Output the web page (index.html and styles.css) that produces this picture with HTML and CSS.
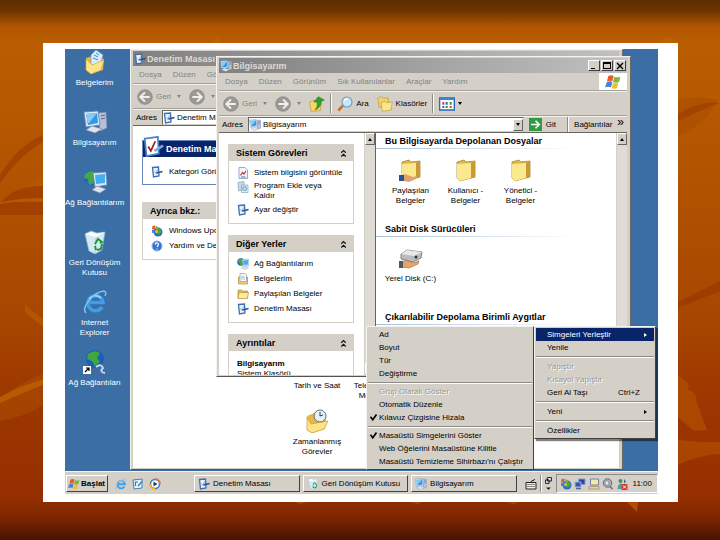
FILE: index.html
```html
<!DOCTYPE html>
<html lang="tr">
<head>
    <meta charset="UTF-8">
    <meta name="viewport" content="width=device-width, initial-scale=1.0">
    <title>Bilgisayarım</title>
    <link rel="stylesheet" href="styles.css">
</head>
<body>
    <!-- leaf background -->
    <svg class="leaves" viewBox="0 0 720 540" preserveAspectRatio="none" aria-hidden="true">
        <g fill="#8f2f00" opacity="0.45">
            <path d="M0 175 Q18 145 45 134 L45 140 Q20 155 0 183Z"/>
            <path d="M0 205 Q10 186 45 186 V215 H0Z"/>
            <path d="M678 302 L720 281 V291 L678 308Z"/>
            <path d="M678 114 Q700 100 720 103 Q700 110 678 121Z"/>
        </g>
        <path d="M678 99 Q700 95 718 100 Q705 125 678 136Z" fill="#9a4300" opacity="0.3"/>
        <path d="M0 203 Q14 198 45 198 V202 Q16 201 0 204Z" fill="#bd5d00" opacity="0.8"/>
        <path d="M27 186 Q35 178 45 175 V186Z" fill="#b85a00" opacity="0.6"/>
        <path d="M25 304 Q32 312 45 320 V328 Q30 317 25 312Z" fill="#b85800" opacity="0.8"/>
        <path d="M0 398 Q20 382 45 373 V404 Q22 418 0 421Z" fill="#ad5000" opacity="0.5"/>
        <path d="M0 397 Q22 385 45 379 V384 Q22 393 0 403Z" fill="#bd6200" opacity="0.8"/>
        <path d="M678 375 L689 384 L688 390 Q697 392 696 400 L699 408 L707 430 L694 431 L678 417Z" fill="#b05000" opacity="0.7"/>
        <path d="M678 440 L700 442 H720 V454 Q698 455 678 465Z" fill="#b05000" opacity="0.65"/>
        <path d="M627 502 H638 L637 512Z" fill="#b85800" opacity="0.8"/>
        <path d="M212 43 L217 35 L222 43Z M655 43 Q665 35 674 38 L672 43Z" fill="#c06600" opacity="0.5"/>
        <path d="M295 502 H308 L300 504Z M410 502 h12 l-4 2Z M505 502 h14 l-5 2Z" fill="#b85800" opacity="0.6"/>
    </svg>

    <!-- icon set -->
    <svg class="icon-set" aria-hidden="true">
        <symbol id="folder" viewBox="0 0 24 24">
            <path d="M3 4 L10 2 L12 4 L21 3 V19 L6 23 L3 20Z" fill="#e0b64a" stroke="#a8862c" stroke-width="0.8"/>
            <path d="M3 6 L17 5 L17 20 L6 23 L3 20Z" fill="#fbe98f"/>
            <path d="M17 5 L21 3 V19 L17 20Z" fill="#c99a33"/>
        </symbol>
        <symbol id="shared" viewBox="0 0 24 24">
            <use href="#folder"/>
            <path d="M1 18 L6 16 L14 19 L18 18 L17 21 L10 24 L1 22Z" fill="#e0a070"/>
            <path d="M0 17 H5 V23 H0Z" fill="#2d4f96"/>
        </symbol>
        <symbol id="documents" viewBox="0 0 24 24">
            <path d="M3 8 L10 6 L21 9 L20 20 L8 24 L3 20Z" fill="#e6b93f"/>
            <path d="M8 5 L13 0 L20 5 L17 15 L8 15Z" fill="#d7ecfa" stroke="#7fa6cc" stroke-width="0.7"/>
            <path d="M11 5 l4 2 M10 8 l5 2 M13 3 l3 2" stroke="#4f8fc8"/>
            <path d="M3 9 L9 15 L21 10 L18 20 L8 24 L3 20Z" fill="#fde48a" stroke="#d1a13a" stroke-width="0.6"/>
        </symbol>
        <symbol id="scheduled" viewBox="0 0 24 24">
            <path d="M2 7 L9 4 L21 9 L20 20 L7 24 L2 21Z" fill="#e6b93f"/>
            <circle cx="15" cy="7" r="6" fill="#e4f1f5" stroke="#668"/>
            <path d="M15 3 V7 L18 6" fill="none" stroke="#246"/>
            <path d="M2 8 L6 15 L23 12 L19 20 L7 24 L2 21Z" fill="#fde48a" stroke="#c99a33" stroke-width="0.7"/>
        </symbol>
        <symbol id="computer" viewBox="0 0 24 24">
            <path d="M15 3 L23 2 L24 18 L17 21Z" fill="#b5bfd8" stroke="#7783a5" stroke-width="0.7"/>
            <path d="M18 6 l4 -1 M18 9 l4 -1" stroke="#59668c"/>
            <path d="M1 2 L15 1 L17 15 L3 17Z" fill="#dce8f5" stroke="#6c86af" stroke-width="0.8"/>
            <path d="M3 4 L14 3 L15 13 L5 15Z" fill="#2d9ae8"/>
            <path d="M3 4 L14 3 L6 13 L5 13Z" fill="#86cbf5"/>
            <path d="M3 20 L9 16 L19 19 L12 23Z" fill="#dfe3ec" stroke="#7c88a6" stroke-width="0.6"/>
        </symbol>
        <symbol id="network" viewBox="0 0 24 24">
            <circle cx="8" cy="8" r="7.5" fill="#2768b8"/>
            <path d="M2 4 Q8 -1 13 3 L10 8 L11 13 L6 15 L5 9 L1 8Z" fill="#45a844"/>
            <path d="M10 3 L23 2 L24 15 L12 17Z" fill="#dce8f5" stroke="#6c86af" stroke-width="0.8"/>
            <path d="M12 5 L22 4 L22 13 L13 14Z" fill="#43aef0"/>
            <path d="M9 20 L14 16 L23 19 L17 23Z" fill="#dfe3ec" stroke="#7c88a6" stroke-width="0.6"/>
        </symbol>
        <symbol id="bin" viewBox="0 0 24 24">
            <path d="M2 4 L8 1 L14 3 L22 2 L19 20 L12 24 L6 21Z" fill="#d5eaf4" stroke="#92b8cf" stroke-width="0.7"/>
            <path d="M2 4 L13 7 L22 2 L14 4 L8 2Z" fill="#fff"/>
            <path d="M13 7 L12 23" stroke="#b0cedd"/>
            <path d="M12 14 L15 9 L19 12 L17 13 M19 14 L18 19 L14 20 M12 16 L13 20" fill="none" stroke="#1f9a3c" stroke-width="2"/>
        </symbol>
        <symbol id="ie" viewBox="0 0 24 24">
            <path d="M19 17 A7.5 7.5 0 1 1 20 12.5 H7" fill="none" stroke="#3f9fe6" stroke-width="3.6"/>
            <path d="M18 8 A8 8 0 0 0 6 9" fill="none" stroke="#a4dcfc" stroke-width="1.5"/>
            <path d="M3 23 C-2 18 10 2 21 1 Q24 2 22 6" fill="none" stroke="#7cc3f2" stroke-width="1.5"/>
        </symbol>
        <symbol id="globe-link" viewBox="0 0 24 24">
            <circle cx="12" cy="9" r="9" fill="#1d5fb5"/>
            <path d="M5 4 Q11 -1 17 3 L14 8 L17 12 L12 16 L9 11 L4 9Z" fill="#3fa73f"/>
            <path d="M13 17 Q18 13 20 18 Q16 22 22 23" fill="none" stroke="#c7d6e8" stroke-width="2"/>
            <path d="M0 16 H8 V24 H0Z" fill="#fff"/>
            <path d="M2 22 L6 18 M3 18 H6 V21" fill="none" stroke="#000" stroke-width="1.2"/>
        </symbol>
        <symbol id="panel" viewBox="0 0 24 24">
            <path d="M3 3 L15 2 L16 20 L5 22Z" fill="#e8f1fb" stroke="#3c70b0" stroke-width="2.6"/>
            <path d="M7 11 L10 15 L13 7" fill="none" stroke="#8aa6c8" stroke-width="2"/>
            <path d="M11 14 L23 11" stroke="#27508c" stroke-width="3.4"/>
        </symbol>
        <symbol id="panel-check" viewBox="0 0 24 24">
            <path d="M2 3 L17 1 L18 20 L4 23Z" fill="#fff" stroke="#4a83c6" stroke-width="2"/>
            <path d="M6 12 L9 17 L14 6" fill="none" stroke="#a31d16" stroke-width="2"/>
            <path d="M13 17 L23 11" stroke="#7eaadf" stroke-width="3"/>
        </symbol>
        <symbol id="flag" viewBox="0 0 24 24">
            <path d="M5 3 Q9 1 13 3 L11 11 Q7 9 3 11Z" fill="#e8582a"/>
            <path d="M14 4 Q18 6 23 4 L21 12 Q16 14 12 12Z" fill="#7db83a"/>
            <path d="M3 12 Q7 10 11 12 L9 20 Q5 18 0 20Z" fill="#3c83dc"/>
            <path d="M12 13 Q16 15 20 13 L18 21 Q14 23 10 21Z" fill="#f6bd27"/>
        </symbol>
        <symbol id="up" viewBox="0 0 24 24">
            <path d="M1 9 L8 6 L10 9 L19 8 L17 22 L3 23Z" fill="#f6d568" stroke="#b08a2b" stroke-width="0.8"/>
            <path d="M9 21 Q14 16 12 9 H7 L14 1 L23 6 L18 8 Q19 17 9 21Z" fill="#2aa02c" stroke="#12701a" stroke-width="0.7"/>
        </symbol>
        <symbol id="search" viewBox="0 0 24 24">
            <path d="M2 22 L9 14" stroke="#c96f31" stroke-width="4"/>
            <circle cx="15" cy="9" r="7.5" fill="#c6e6fa" stroke="#6a98c6" stroke-width="1.6"/>
            <path d="M11 8 Q12 4 16 4" stroke="#fff" stroke-width="2" fill="none"/>
        </symbol>
        <symbol id="folders" viewBox="0 0 24 24">
            <path d="M1 3 L7 1 L9 3 L17 3 V15 L3 17Z" fill="#f3d169" stroke="#b08a2b" stroke-width="0.8"/>
            <path d="M6 10 L12 8 L14 10 L23 9 L21 21 L8 23Z" fill="#fbe58a" stroke="#b08a2b" stroke-width="0.8"/>
        </symbol>
        <symbol id="views" viewBox="0 0 24 20">
            <path d="M1 1 H23 V19 H1Z" fill="#fff" stroke="#2767c0" stroke-width="2"/>
            <path d="M1 1 H23 V4 H1Z" fill="#3c83dc"/>
            <path d="M5 7h3v4h-3z M16 13h3v3h-3z" fill="#c6452b"/>
            <path d="M10 7h3v4h-3z M5 13h3v3h-3z" fill="#2767c0"/>
            <path d="M16 7h3v4h-3z M10 13h3v3h-3z" fill="#36914b"/>
        </symbol>
        <symbol id="go" viewBox="0 0 24 24">
            <path d="M0 0 H24 V24 H0Z" fill="#2f9a40"/>
            <path d="M4 12 H18 M12 5 L19 12 L12 19" fill="none" stroke="#fff" stroke-width="3"/>
        </symbol>
        <symbol id="sysinfo" viewBox="0 0 24 24">
            <path d="M4 1 H16 L21 6 V23 H4Z" fill="#f2f6fc" stroke="#7189b0" stroke-width="1.4"/>
            <path d="M7 17 L11 11 L14 14 L18 8" fill="none" stroke="#c8372d" stroke-width="2.4"/>
            <path d="M8 20 h9" stroke="#4b76bb" stroke-width="2"/>
        </symbol>
        <symbol id="programs" viewBox="0 0 24 24">
            <path d="M2 3 L14 1 V17 L3 20Z" fill="#c4d9ec" stroke="#7895b5" stroke-width="1.2"/>
            <path d="M9 8 H22 V23 H9Z" fill="#e5eff7" stroke="#7895b5" stroke-width="1.2"/>
            <circle cx="15" cy="15" r="4.5" fill="#a8d2e4" stroke="#4b86a8"/>
        </symbol>
        <symbol id="papers" viewBox="0 0 24 24">
            <path d="M3 8 H21 V22 H3Z" fill="#f5d36a" stroke="#a98529" stroke-width="1.2"/>
            <path d="M6 1 H16 L19 4 V17 H6Z" fill="#fff" stroke="#7189b0" stroke-width="1.2"/>
            <path d="M8 6 h7 M8 9 h8 M8 12 h8" stroke="#6b93c6"/>
        </symbol>
        <symbol id="open-folder" viewBox="0 0 24 24">
            <path d="M2 4 H9 L11 6 H21 V20 H2Z" fill="#e9c04f" stroke="#a98529" stroke-width="1.2"/>
            <path d="M2 21 L4 9 H23 L21 21Z" fill="#fdeb9b" stroke="#a98529" stroke-width="1.2"/>
        </symbol>
        <symbol id="disk" viewBox="0 0 24 24">
            <path d="M2 8 L8 4 L23 6 L22 12 L14 16 L2 13Z" fill="#b9bcc1" stroke="#6a6d72" stroke-width="0.8"/>
            <path d="M2 8 L8 4 L23 6 L15 10Z" fill="#e5e7ea"/>
            <circle cx="17" cy="11" r="1.5" fill="#333"/>
            <path d="M1 17 L7 14 L14 17 L20 15 L19 18 L10 22 L1 21Z" fill="#e6a66b" stroke="#a2662f" stroke-width="0.6"/>
            <path d="M0 15 H4 V22 H0Z" fill="#52575e"/>
        </symbol>
        <symbol id="update" viewBox="0 0 24 24">
            <circle cx="14" cy="14" r="9" fill="#2b6cc4"/>
            <path d="M14 6 Q21 8 21 14 L15 20 L12 13Z" fill="#49a646"/>
            <path d="M3 2 L9 1 L8 8 L2 9Z" fill="#e8582a"/>
            <path d="M10 2 L15 4 L14 10 L9 8Z" fill="#7db83a"/>
            <path d="M2 10 L8 9 L7 15 L2 16Z" fill="#3c83dc"/>
            <path d="M9 10 L14 11 L13 17 L8 15Z" fill="#f6bd27"/>
        </symbol>
        <symbol id="help" viewBox="0 0 24 24">
            <circle cx="12" cy="12" r="10" fill="#3573cf" stroke="#8fb3e4" stroke-width="2"/>
            <path d="M8 9 Q9 5 13 6 Q17 8 13 12 L12 14 M12 17 v2" fill="none" stroke="#fff" stroke-width="2.4"/>
        </symbol>
        <symbol id="media" viewBox="0 0 24 24">
            <circle cx="12" cy="12" r="9" fill="#fff" stroke="#3f7ac2" stroke-width="3"/>
            <path d="M12 2 A10 10 0 0 1 22 12" fill="none" stroke="#e8782a" stroke-width="4"/>
            <path d="M2 12 A10 10 0 0 0 12 22" fill="none" stroke="#f0b429" stroke-width="4"/>
            <path d="M9 7 L17 12 L9 17Z" fill="#1d3c78"/>
        </symbol>
        <symbol id="desktop-mark" viewBox="0 0 24 24">
            <path d="M2 4 L20 2 V20 L4 22Z" fill="#e6f2fb" stroke="#3f81c0" stroke-width="2"/>
            <path d="M7 16 V8 H12 M12 16 L20 7" fill="none" stroke="#2e78bb" stroke-width="2.4"/>
        </symbol>
        <symbol id="keyboard" viewBox="0 0 24 24">
            <path d="M2 9 H22 V22 H2Z" fill="#f0eee8" stroke="#222" stroke-width="2"/>
            <path d="M5 13 h14 M5 17 h14" stroke="#222" stroke-width="2" stroke-dasharray="2 2"/>
            <path d="M12 9 Q12 5 16 5 Q19 5 19 2" fill="none" stroke="#222" stroke-width="2"/>
        </symbol>
        <symbol id="restore" viewBox="0 0 12 24">
            <path d="M4 1 H11 V7 H4Z M1 5 H7 V11 H1Z" fill="#eee" stroke="#111" stroke-width="1.6"/>
            <path d="M2 18 H10 L6 22Z" fill="#111"/>
        </symbol>
        <symbol id="screens" viewBox="0 0 24 24">
            <path d="M9 2 H22 V13 H9Z" fill="#2448a5" stroke="#8a98c4" stroke-width="2"/>
            <path d="M2 8 H14 V18 H2Z" fill="#3157b8" stroke="#a8b4d6" stroke-width="2"/>
            <path d="M4 21 H14" stroke="#56658e" stroke-width="3"/>
        </symbol>
        <symbol id="tray-pc" viewBox="0 0 24 24">
            <path d="M5 2 H21 V14 H5Z" fill="#f7e9a0" stroke="#6b7fb0" stroke-width="2"/>
            <path d="M2 17 H22 V22 H2Z" fill="#f3d65c" stroke="#8a8a8a" stroke-width="1.4"/>
        </symbol>
        <symbol id="speaker" viewBox="0 0 24 24">
            <circle cx="11" cy="10" r="8.5" fill="#a9adb5" stroke="#666b75" stroke-width="2"/>
            <circle cx="10" cy="10" r="4" fill="#e9ebef" stroke="#666b75"/>
            <path d="M16 17 L21 22" stroke="#666b75" stroke-width="3"/>
        </symbol>
        <symbol id="offline" viewBox="0 0 24 24">
            <circle cx="9" cy="6" r="4" fill="#3f9360"/>
            <path d="M3 22 Q4 11 10 11 Q15 12 16 22Z" fill="#4f9cae"/>
            <path d="M16 2 L20 7 L16 11Z" fill="#336f8d"/>
            <path d="M11 12 H23 V24 H11Z" fill="#d8362a"/>
            <path d="M14 15 L20 21 M20 15 L14 21" stroke="#fff" stroke-width="2"/>
        </symbol>
        <symbol id="arrow-left" viewBox="0 0 24 24">
            <circle cx="12" cy="12" r="11" fill="#9a9995" stroke="#858480"/>
            <path d="M19 12 H6 M12 5 L5 12 L12 19" fill="none" stroke="#f1efea" stroke-width="3"/>
        </symbol>
        <symbol id="arrow-right" viewBox="0 0 24 24">
            <circle cx="12" cy="12" r="11" fill="#9a9995" stroke="#858480"/>
            <path d="M5 12 H18 M12 5 L19 12 L12 19" fill="none" stroke="#f1efea" stroke-width="3"/>
        </symbol>
        <symbol id="chevrons" viewBox="0 0 12 12">
            <path d="M3 5 L6 2 L9 5 M3 10 L6 7 L9 10" fill="none" stroke="#111" stroke-width="1.5"/>
        </symbol>
        <symbol id="check" viewBox="0 0 12 12">
            <path d="M2 5 L5 9 L10 2" fill="none" stroke="#000" stroke-width="2.2"/>
        </symbol>
    </svg>

    <div class="screen">
        <div class="desktop">
            <nav class="desktop-icons">
                <a class="icon-item" href="#"><svg><use href="#documents"/></svg>Belgelerim</a>
                <a class="icon-item" href="#"><svg><use href="#computer"/></svg>Bilgisayarım</a>
                <a class="icon-item" href="#"><svg><use href="#network"/></svg>Ağ Bağlantılarım</a>
                <a class="icon-item" href="#"><svg><use href="#bin"/></svg>Geri Dönüşüm<br>Kutusu</a>
                <a class="icon-item" href="#"><svg><use href="#ie"/></svg>Internet<br>Explorer</a>
                <a class="icon-item" href="#"><svg><use href="#globe-link"/></svg>Ağ Bağlantıları</a>
            </nav>

            <!-- Denetim Masası -->
            <section class="window window-back">
                <header class="title-bar">
                    <svg class="icon"><use href="#panel"/></svg>
                    <h2>Denetim Masası</h2>
                </header>
                <div class="menu-bar">
                    <button>Dosya</button>
                    <button>Düzen</button>
                    <button>Görünüm</button>
                </div>
                <div class="tool-bar">
                    <button class="muted"><svg class="round"><use href="#arrow-left"/></svg>Geri<i class="drop"></i></button>
                    <button class="muted" aria-label="İleri"><svg class="round"><use href="#arrow-right"/></svg><i class="drop"></i></button>
                </div>
                <div class="address-bar">
                    <label for="address-back">Adres</label>
                    <div class="address-box">
                        <svg class="icon"><use href="#panel"/></svg>
                        <input id="address-back" type="text" value="Denetim Masası">
                    </div>
                </div>
                <div class="window-body">
                    <aside class="side">
                        <div class="task-box primary">
                            <h3><svg class="badge"><use href="#panel-check"/></svg>Denetim Masası</h3>
                            <ul>
                                <li><a href="#"><svg class="icon"><use href="#panel"/></svg>Kategori Görünümü</a></li>
                            </ul>
                        </div>
                        <div class="task-box">
                            <h3>Ayrıca bkz.:</h3>
                            <ul>
                                <li><a href="#"><svg class="icon"><use href="#update"/></svg>Windows Update</a></li>
                                <li><a href="#"><svg class="icon"><use href="#help"/></svg>Yardım ve Destek</a></li>
                            </ul>
                        </div>
                    </aside>
                    <div class="panel-icons">
                        <a class="icon-item" href="#"><svg><use href="#scheduled"/></svg>Tarih ve Saat</a>
                        <a class="icon-item" href="#"><svg><use href="#computer"/></svg>Telefon ve<br>Modem</a>
                        <a class="icon-item" href="#"><svg><use href="#scheduled"/></svg>Zamanlanmış<br>Görevler</a>
                    </div>
                </div>
            </section>

            <!-- Bilgisayarım -->
            <section class="window window-front">
                <header class="title-bar">
                    <svg class="icon"><use href="#computer"/></svg>
                    <h2>Bilgisayarım</h2>
                    <div class="title-buttons">
                        <button aria-label="Simge Durumuna Küçült"><svg viewBox="0 0 8 8"><path d="M1 6h4v1H1z"/></svg></button>
                        <button aria-label="Ekranı Kapla"><svg viewBox="0 0 8 8"><path d="M0 0h8v7H0z M1 2v4h6V2z" fill-rule="evenodd"/></svg></button>
                        <button aria-label="Kapat"><svg viewBox="0 0 8 8"><path d="M1 1L7 7M7 1L1 7" stroke="#000" stroke-width="1.4"/></svg></button>
                    </div>
                </header>
                <div class="menu-bar">
                    <button>Dosya</button>
                    <button>Düzen</button>
                    <button>Görünüm</button>
                    <button>Sık Kullanılanlar</button>
                    <button>Araçlar</button>
                    <button>Yardım</button>
                    <span class="brand"><svg class="icon-md"><use href="#flag"/></svg></span>
                </div>
                <div class="tool-bar">
                    <button class="muted"><svg class="round"><use href="#arrow-left"/></svg>Geri<i class="drop"></i></button>
                    <button class="muted" aria-label="İleri"><svg class="round"><use href="#arrow-right"/></svg><i class="drop"></i></button>
                    <button aria-label="Yukarı"><svg class="round"><use href="#up"/></svg></button>
                    <span class="divider"></span>
                    <button><svg class="round"><use href="#search"/></svg>Ara</button>
                    <button><svg class="round"><use href="#folders"/></svg>Klasörler</button>
                    <span class="divider"></span>
                    <button aria-label="Görünümler"><svg class="round"><use href="#views"/></svg><i class="drop"></i></button>
                </div>
                <div class="address-bar">
                    <label for="address-front">Adres</label>
                    <div class="address-box">
                        <svg class="icon"><use href="#computer"/></svg>
                        <input id="address-front" type="text" value="Bilgisayarım">
                        <button class="scroll-btn" aria-label="Listeyi aç"><i class="drop"></i></button>
                    </div>
                    <button class="go"><svg class="icon-go"><use href="#go"/></svg>Git</button>
                    <span class="divider"></span>
                    <span>Bağlantılar</span>
                    <span class="more">»</span>
                </div>
                <div class="window-body">
                    <aside class="side">
                        <div class="task-box">
                            <h3>Sistem Görevleri<svg class="fold"><use href="#chevrons"/></svg></h3>
                            <ul>
                                <li><a href="#"><svg class="icon"><use href="#sysinfo"/></svg>Sistem bilgisini görüntüle</a></li>
                                <li><a class="two-line" href="#"><svg class="icon"><use href="#programs"/></svg>Program Ekle veya<br>Kaldır</a></li>
                                <li><a href="#"><svg class="icon"><use href="#panel"/></svg>Ayar değiştir</a></li>
                            </ul>
                        </div>
                        <div class="task-box">
                            <h3>Diğer Yerler<svg class="fold"><use href="#chevrons"/></svg></h3>
                            <ul>
                                <li><a href="#"><svg class="icon"><use href="#network"/></svg>Ağ Bağlantılarım</a></li>
                                <li><a href="#"><svg class="icon"><use href="#papers"/></svg>Belgelerim</a></li>
                                <li><a href="#"><svg class="icon"><use href="#open-folder"/></svg>Paylaşılan Belgeler</a></li>
                                <li><a href="#"><svg class="icon"><use href="#panel"/></svg>Denetim Masası</a></li>
                            </ul>
                        </div>
                        <div class="task-box">
                            <h3>Ayrıntılar<svg class="fold"><use href="#chevrons"/></svg></h3>
                            <p><b>Bilgisayarım</b><br>Sistem Klasörü</p>
                        </div>
                    </aside>
                    <div class="scroll">
                        <button class="scroll-btn" aria-label="Yukarı kaydır"><i class="drop rise"></i></button>
                        <button class="scroll-btn" aria-label="Aşağı kaydır"><i class="drop"></i></button>
                    </div>
                    <main class="files">
                        <section>
                            <h3>Bu Bilgisayarda Depolanan Dosyalar</h3>
                            <div class="file-row">
                                <a class="icon-item" href="#"><svg><use href="#shared"/></svg>Paylaşılan<br>Belgeler</a>
                                <a class="icon-item" href="#"><svg><use href="#folder"/></svg>Kullanıcı -<br>Belgeler</a>
                                <a class="icon-item" href="#"><svg><use href="#folder"/></svg>Yönetici -<br>Belgeler</a>
                            </div>
                        </section>
                        <section>
                            <h3>Sabit Disk Sürücüleri</h3>
                            <div class="file-row">
                                <a class="icon-item" href="#"><svg><use href="#disk"/></svg>Yerel Disk (C:)</a>
                            </div>
                        </section>
                        <section>
                            <h3>Çıkarılabilir Depolama Birimli Aygıtlar</h3>
                        </section>
                    </main>
                    <div class="scroll">
                        <button class="scroll-btn" aria-label="Yukarı kaydır"><i class="drop rise"></i></button>
                    </div>
                </div>
            </section>

            <!-- right-click menu with its submenu -->
            <div class="menu submenu">
                <button>Ad</button>
                <button>Boyut</button>
                <button>Tür</button>
                <button>Değiştirme</button>
                <hr>
                <button disabled>Grup Olarak Göster</button>
                <button>Otomatik Düzenle</button>
                <button><svg class="tick"><use href="#check"/></svg>Kılavuz Çizgisine Hizala</button>
                <hr>
                <button><svg class="tick"><use href="#check"/></svg>Masaüstü Simgelerini Göster</button>
                <button>Web Öğelerini Masaüstüne Kilitle</button>
                <button>Masaüstü Temizleme Sihirbazı'nı Çalıştır</button>
            </div>
            <div class="menu context">
                <button class="active">Simgeleri Yerleştir<i class="next"></i></button>
                <button>Yenile</button>
                <hr>
                <button disabled>Yapıştır</button>
                <button disabled>Kısayol Yapıştır</button>
                <button>Geri Al Taşı<kbd>Ctrl+Z</kbd></button>
                <hr>
                <button>Yeni<i class="next"></i></button>
                <hr>
                <button>Özellikler</button>
            </div>
        </div>

        <footer class="taskbar">
            <button class="start"><svg class="icon"><use href="#flag"/></svg>Başlat</button>
            <div class="quick">
                <a href="#" aria-label="Internet Explorer"><svg class="icon"><use href="#ie"/></svg></a>
                <a href="#" aria-label="Masaüstünü Göster"><svg class="icon"><use href="#desktop-mark"/></svg></a>
                <a href="#" aria-label="Media Player"><svg class="icon"><use href="#media"/></svg></a>
            </div>
            <div class="tasks">
                <button><svg class="icon"><use href="#panel"/></svg>Denetim Masası</button>
                <button><svg class="icon"><use href="#bin"/></svg>Geri Dönüşüm Kutusu</button>
                <button><svg class="icon"><use href="#computer"/></svg>Bilgisayarım</button>
            </div>
            <div class="language">
                <svg class="icon"><use href="#keyboard"/></svg>
                <span class="divider"></span>
                <svg class="restore"><use href="#restore"/></svg>
            </div>
            <div class="tray">
                <svg class="icon"><use href="#update"/></svg>
                <svg class="icon"><use href="#screens"/></svg>
                <svg class="icon"><use href="#tray-pc"/></svg>
                <svg class="icon"><use href="#speaker"/></svg>
                <svg class="icon"><use href="#offline"/></svg>
                <time>11:00</time>
            </div>
        </footer>
    </div>
</body>
</html>
```
FILE: styles.css
```css
* {
    box-sizing: border-box;
}
body {
    margin: 0;
    height: 100vh;
    padding: 43px 42px 38px 43px;
    display: flex;
    overflow: hidden;
    font-family: "Liberation Sans", Arial, sans-serif;
    font-size: 8px;
    line-height: 10px;
    color: #000;
    background: linear-gradient(#5c2c00 0, #6e3500 2%, #b25600 5%, #ba5d00 8%, #b65800 22%, #a84700 58%, #9c3700 74%, #962f00 92%, #7c2600 96%, #481400 100%);
}
.leaves {
    position: absolute;
    top: 0;
    left: 0;
    width: 100%;
    height: 100%;
    z-index: -1;
}
.icon-set {
    display: none;
}
h2, h3, p, ul {
    margin: 0;
    padding: 0;
}
h2, h3 {
    font-size: 9px;
}
ul {
    list-style: none;
}
a {
    color: inherit;
    text-decoration: none;
}
button, input {
    font: inherit;
    color: inherit;
    margin: 0;
    padding: 0;
    border: none;
    background: none;
}
button {
    display: flex;
    align-items: center;
    white-space: nowrap;
}
svg {
    flex: none;
}
.screen {
    flex: 1;
    min-width: 0;
    display: flex;
    flex-direction: column;
    background: #fff;
    padding: 6px 20px 8px 22px;
}
.desktop {
    flex: 1;
    min-height: 0;
    position: relative;
    overflow: hidden;
    background: #3a6ea5;
}

/* icons */
.icon {
    width: 12px;
    height: 12px;
}
.icon-md {
    width: 16px;
    height: 16px;
}
.icon-go {
    width: 13px;
    height: 13px;
}
.round {
    width: 16px;
    height: 16px;
}
.icon-item {
    display: flex;
    flex-direction: column;
    align-items: center;
    text-align: center;
    white-space: nowrap;
}
.icon-item svg {
    width: 24px;
    height: 24px;
    margin-bottom: 4px;
}
.desktop-icons {
    width: 58px;
    display: grid;
    grid-auto-rows: 60px;
    padding-top: 1px;
    color: #fff;
}
.drop {
    border: 2px solid transparent;
    border-top: 3px solid currentColor;
    border-bottom: 0;
}
.drop.rise {
    border-top: 0;
    border-bottom: 3px solid currentColor;
}
.divider {
    width: 2px;
    align-self: stretch;
    border-left: 1px solid #8c8a84;
    border-right: 1px solid #fff;
}

/* windows */
.window {
    position: absolute;
    display: flex;
    flex-direction: column;
    background: #d4d0c8;
    border: 1px solid #f4f2ee;
    border-right-color: #6b6963;
    border-bottom-color: #55534f;
    padding: 0 3px 1px 2px;
    overflow: hidden;
}
.window-back {
    top: 0;
    bottom: 1px;
    left: 65px;
    width: 493px;
}
.window-front {
    top: 7px;
    bottom: 94px;
    left: 151px;
    width: 415px;
}
.title-bar {
    flex: none;
    height: 15px;
    margin-top: 1px;
    display: flex;
    align-items: center;
    gap: 1px;
    padding: 0 1px;
    background: linear-gradient(90deg, #808080, #a9a8a8 60%, #c0c0c0);
    color: #dedbd4;
}
.title-buttons {
    display: flex;
    gap: 1px;
    margin-left: auto;
}
.title-buttons button {
    width: 12px;
    height: 11px;
    justify-content: center;
    background: #d4d0c8;
    border: 1px solid #fff;
    border-right-color: #404040;
    border-bottom-color: #404040;
}
.title-buttons svg {
    width: 8px;
    height: 8px;
}
.menu-bar {
    flex: none;
    height: 18px;
    display: flex;
    align-items: center;
    gap: 11px;
    padding-left: 6px;
    color: #85837d;
    border-bottom: 1px solid #a3a19b;
}
.brand {
    margin-left: auto;
    width: 28px;
    height: 17px;
    display: flex;
    align-items: center;
    justify-content: center;
    background: #fff;
}
.tool-bar {
    flex: none;
    height: 25px;
    display: flex;
    align-items: center;
    gap: 8px;
    padding: 2px 4px;
    border-top: 1px solid #f4f2ee;
    border-bottom: 1px solid #a3a19b;
}
.tool-bar button {
    gap: 3px;
}
.tool-bar .divider {
    margin: 0 -3px;
}
.muted {
    color: #85837d;
}
.muted .drop {
    margin-left: 3px;
}
.address-bar {
    flex: none;
    height: 16px;
    display: flex;
    align-items: center;
    gap: 5px;
    padding-left: 3px;
    border-top: 1px solid #f4f2ee;
}
.address-box {
    flex: 1;
    height: 15px;
    display: flex;
    align-items: center;
    gap: 2px;
    background: #fff;
    border: 1px solid #66645f;
    border-right-color: #d4d0c8;
    border-bottom-color: #d4d0c8;
}
.address-box input {
    flex: 1;
    min-width: 0;
    outline: none;
}
.go {
    gap: 4px;
    margin-right: 6px;
}
.more {
    font-size: 12px;
    align-self: flex-start;
    margin-right: 3px;
}
.window-body {
    flex: 1;
    min-height: 0;
    display: flex;
    background: #fff;
    border-top: 1px solid #66645f;
    overflow: hidden;
}
.scroll {
    flex: none;
    width: 11px;
    display: flex;
    flex-direction: column;
    justify-content: space-between;
    background: #dfdcd5;
    border-left: 1px solid #d4d0c8;
}
.scroll-btn {
    flex: none;
    width: 10px;
    height: 12px;
    justify-content: center;
    background: #d4d0c8;
    border: 1px solid #fff;
    border-right-color: #66645f;
    border-bottom-color: #66645f;
}

/* task pane */
.side {
    flex: none;
    width: 145px;
    padding: 11px 10px 0 9px;
    display: flex;
    flex-direction: column;
    gap: 11px;
}
.task-box {
    flex: none;
    border: 1px solid #d4d0c8;
    white-space: nowrap;
}
.task-box h3 {
    height: 16px;
    display: flex;
    align-items: center;
    padding: 0 5px 0 7px;
    background: #d4d0c8;
}
.fold {
    width: 9px;
    height: 9px;
    margin-left: auto;
}
.task-box ul {
    padding: 4px 8px 6px;
}
.task-box li a {
    display: flex;
    align-items: center;
    gap: 5px;
    min-height: 15px;
}
.task-box .two-line {
    align-items: flex-start;
    min-height: 22px;
    padding-top: 1px;
}
.task-box p {
    padding: 8px 8px;
}
.window-back .side {
    width: 154px;
    padding-top: 14px;
    gap: 17px;
}
.window-back .task-box li a {
    gap: 6px;
}
.primary {
    border-color: #6a86b8;
}
.primary h3 {
    gap: 2px;
    padding-left: 0;
    background: #0a246a;
    color: #fff;
}
.task-box.primary ul {
    padding: 7px 8px 5px;
}
.badge {
    width: 21px;
    height: 21px;
    margin-top: -6px;
}

/* file pane */
.files {
    flex: 1;
    min-width: 0;
    padding-top: 1px;
    border-left: 1px solid #66645f;
    overflow: hidden;
}
.files section {
    height: 88px;
}
.files h3 {
    padding: 2px 0 2px 9px;
    border-bottom: 1px solid;
    border-image: linear-gradient(90deg, #a8bfd8, #fff 85%) 1;
}
.file-row {
    display: grid;
    grid-template-columns: repeat(auto-fill, 55px);
    padding: 9px 7px;
}
.panel-icons {
    display: grid;
    grid-template-columns: 60px 50px;
    grid-auto-rows: 56px;
    align-content: end;
    padding-bottom: 3px;
}

/* menus */
.menu {
    position: absolute;
    top: 277px;
    padding: 1px;
    background: #d4d0c8;
    border: 1px solid #f4f2ee;
    border-right-color: #404040;
    border-bottom-color: #404040;
}
.submenu {
    left: 301px;
    width: 168px;
}
.context {
    left: 469px;
    width: 122px;
    box-shadow: 2px 2px 1px rgba(0,0,0,0.5);
}
.menu button {
    width: 100%;
    height: 13px;
    padding: 0 7px 0 11px;
}
.menu button:disabled {
    color: #9b9992;
    text-shadow: 1px 1px 0 #fff;
}
.menu .active {
    background: #0a246a;
    color: #fff;
}
.menu hr {
    height: 2px;
    margin: 2px 0;
    border: none;
    border-top: 1px solid #8c8a84;
    border-bottom: 1px solid #fff;
}
.submenu hr {
    margin: 2px 0 1px;
}
.menu kbd {
    font: inherit;
    margin-left: auto;
    padding-right: 7px;
}
.tick {
    width: 9px;
    height: 9px;
    margin-left: -10px;
    margin-right: 1px;
}
.next {
    margin-left: auto;
    border: 2px solid transparent;
    border-left: 3px solid currentColor;
    border-right: 0;
}

/* taskbar */
.taskbar {
    flex: none;
    height: 23px;
    display: flex;
    align-items: center;
    background: #d4d0c8;
    border-top: 1px solid #f4f2ee;
    padding: 1px 0 0 1px;
}
.taskbar button {
    height: 17px;
    gap: 3px;
    padding: 0 3px;
    border: 1px solid #fff;
    border-right-color: #404040;
    border-bottom-color: #404040;
}
.taskbar .start {
    gap: 1px;
    padding: 0 2px 0 1px;
    font-weight: bold;
}
.quick {
    flex: none;
    width: 86px;
    padding-left: 7px;
    display: flex;
    gap: 5px;
}
.quick a {
    display: flex;
}
.tasks {
    flex: 1;
    min-width: 0;
    display: flex;
    gap: 3px;
}
.tasks button {
    flex: 1;
}
.language {
    display: flex;
    align-items: center;
    gap: 3px;
    padding: 0 4px 0 8px;
}
.language .divider {
    height: 17px;
}
.restore {
    width: 7px;
    height: 14px;
}
.tray {
    height: 19px;
    display: flex;
    align-items: center;
    gap: 2px;
    padding: 0 5px 0 3px;
    border: 1px solid #8c8a84;
    border-right-color: #fff;
    border-bottom-color: #fff;
}
.tray time {
    margin-left: 3px;
}
```
